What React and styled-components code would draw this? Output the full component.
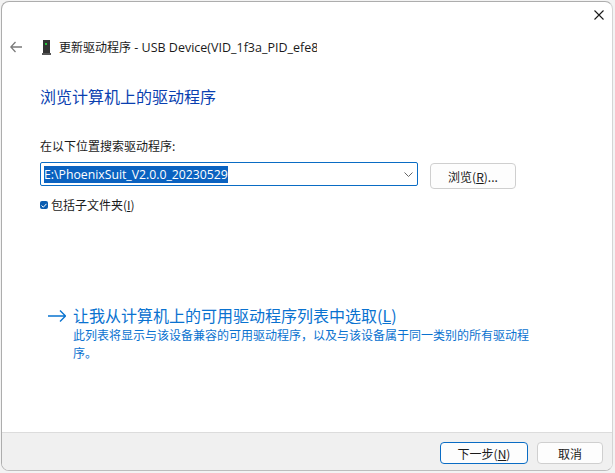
import styled, { createGlobalStyle } from "styled-components";

const GlobalStyle = createGlobalStyle`
  html, body {
    margin: 0;
    padding: 0;
    width: 615px;
    height: 473px;
    overflow: hidden;
    background: #f3f3f3;
  }
`;

const CJK = `"Noto Sans CJK SC", "Liberation Sans", sans-serif`;
const UI = `"Open Sans", "Noto Sans CJK SC", sans-serif`;

const App = () => {
  return (
    <>
      <GlobalStyle />
      <Page>
        <Window>
          <Body>
            <CloseRow>
              <svg width="10" height="10" viewBox="0 0 10 10">
                <path d="M0.5 0.5L9.5 9.5M9.5 0.5L0.5 9.5" stroke="#1a1a1a" strokeWidth="1.1" fill="none" />
              </svg>
            </CloseRow>
            <TitleRow>
              <svg width="12" height="12" viewBox="0 0 12 12">
                <path d="M5.5 1L0.8 6L5.5 11M0.8 6H12" stroke="#7a7a7a" strokeWidth="1.3" fill="none" />
              </svg>
              <DeviceIcon width="9" height="15" viewBox="0 0 9 15">
                <rect x="1" y="0" width="7" height="13" fill="#333" />
                <rect x="0" y="13" width="9" height="2" fill="#555" />
                <rect x="3" y="3" width="2" height="2" fill="#22c83a" />
              </DeviceIcon>
              <TitleText>
                更新驱动程序<TitleLatin> - USB Device(VID_1f3a_PID_efe8</TitleLatin>
              </TitleText>
            </TitleRow>
            <Heading>浏览计算机上的驱动程序</Heading>
            <FieldLabel>在以下位置搜索驱动程序:</FieldLabel>
            <PathRow>
              <PathBox>
                <PathValue>E:\PhoenixSuit_V2.0.0_20230529</PathValue>
                <svg width="9" height="5" viewBox="0 0 9 5">
                  <path d="M0.5 0.5L4.5 4.5L8.5 0.5" stroke="#666" strokeWidth="1" fill="none" />
                </svg>
              </PathBox>
              <BrowseButton $width="86px" $height="26px">
                浏览(<u>R</u>)...
              </BrowseButton>
            </PathRow>
            <CheckRow>
              <CheckBox>
                <svg width="6" height="5" viewBox="0 0 6 5">
                  <path d="M0.5 2.5L2.3 4.2L5.5 0.8" stroke="#fff" strokeWidth="1" fill="none" />
                </svg>
              </CheckBox>
              <span>
                包括子文件夹(<u>I</u>)
              </span>
            </CheckRow>
            <LinkBlock>
              <svg width="18" height="12" viewBox="0 0 18 12">
                <path d="M12 0.5L17.5 6L12 11.5M17.5 6H0" stroke="#0a74d0" strokeWidth="1.4" fill="none" />
              </svg>
              <LinkText>
                <LinkTitle>
                  让我从计算机上的可用驱动程序列表中选取(<u>L</u>)
                </LinkTitle>
                <LinkNote>此列表将显示与该设备兼容的可用驱动程序，以及与该设备属于同一类别的所有驱动程序。</LinkNote>
              </LinkText>
            </LinkBlock>
          </Body>
          <Footer>
            <PushButton $width="88px" $height="22px" $primary>
              下一步(<u>N</u>)
            </PushButton>
            <PushButton $width="66px" $height="22px">
              取消
            </PushButton>
          </Footer>
        </Window>
      </Page>
    </>
  );
};

const Page = styled.div`
  box-sizing: border-box;
  width: 615px;
  height: 473px;
  padding: 1px 2px 2px 1px;
`;

const Window = styled.div`
  box-sizing: border-box;
  width: 100%;
  height: 100%;
  display: flex;
  flex-direction: column;
  border: 1px solid #adadad;
  border-right-color: #d4d4d4;
  border-bottom-color: #bdbdbd;
  border-radius: 8px;
  background: #fff;
  overflow: hidden;
  font-family: ${CJK};
  color: #1a1a1a;
`;

const Body = styled.div`
  flex: 1;
  display: flex;
  flex-direction: column;
  padding-left: 8px;
`;

const CloseRow = styled.div`
  height: 25px;
  padding: 8px 8px 0 0;
  display: flex;
  justify-content: flex-end;
`;

const TitleRow = styled.div`
  margin-top: 2px;
  height: 20px;
  display: flex;
  align-items: center;
`;

const DeviceIcon = styled.svg`
  margin-left: 20px;
  flex-shrink: 0;
`;

const TitleText = styled.div`
  margin-left: 8px;
  width: 258px;
  overflow: hidden;
  white-space: nowrap;
  font-family: ${CJK};
  font-size: 12px;
  line-height: 20px;
`;

const TitleLatin = styled.span`
  font-family: ${UI};
  font-size: 12.5px;
`;

const Heading = styled.h1`
  margin: 28px 0 0 30px;
  font-family: ${CJK};
  font-size: 16px;
  font-weight: 400;
  line-height: 22px;
  color: #0a3fb0;
`;

const FieldLabel = styled.div`
  margin: 30px 0 0 30px;
  font-size: 12px;
  line-height: 18px;
`;

const PathRow = styled.div`
  margin: 7px 0 0 30px;
  display: flex;
  align-items: flex-start;
  gap: 12px;
`;

const PathBox = styled.div`
  box-sizing: border-box;
  width: 378px;
  height: 24px;
  padding: 0 4px 0 3px;
  display: flex;
  align-items: center;
  justify-content: space-between;
  border: 1px solid #0a6cc4;
  border-radius: 2px;
`;

const PathValue = styled.span`
  display: inline-block;
  background: #0a62c0;
  color: #fff;
  font-family: ${UI};
  font-size: 12.25px;
  line-height: 17px;
  white-space: nowrap;
`;

const PushButton = styled.div`
  box-sizing: border-box;
  width: ${(p) => p.$width};
  height: ${(p) => p.$height};
  display: flex;
  align-items: center;
  justify-content: center;
  white-space: pre;
  font-size: 12px;
  background: #fdfdfd;
  border: 1px solid ${(p) => (p.$primary ? "#0a6cc4" : "#cfcfcf")};
  border-radius: 4px;
`;

const BrowseButton = styled(PushButton)`
  margin-top: 1px;
`;

const CheckRow = styled.div`
  margin: 7px 0 0 30px;
  display: flex;
  align-items: center;
  gap: 3px;
  font-size: 12px;
  line-height: 18px;
`;

const CheckBox = styled.div`
  box-sizing: border-box;
  width: 8px;
  height: 8px;
  display: flex;
  align-items: center;
  justify-content: center;
  background: #0a5cb0;
  border-radius: 2px;
`;

const LinkBlock = styled.div`
  margin: 90px 0 0 38px;
  display: flex;
  align-items: flex-start;
  gap: 7px;
  svg {
    margin-top: 6px;
    flex-shrink: 0;
  }
`;

const LinkText = styled.div`
  width: 460px;
  color: #0a72d0;
`;

const LinkTitle = styled.div`
  font-size: 16px;
  line-height: 22px;
  white-space: nowrap;
`;

const LinkNote = styled.div`
  font-size: 12px;
  line-height: 18px;
`;

const Footer = styled.div`
  box-sizing: border-box;
  height: 38px;
  padding: 9px 9px 0 0;
  display: flex;
  justify-content: flex-end;
  gap: 9px;
  background: #f0f0f0;
  border-top: 1px solid #dcdcdc;
`;

export default App;
